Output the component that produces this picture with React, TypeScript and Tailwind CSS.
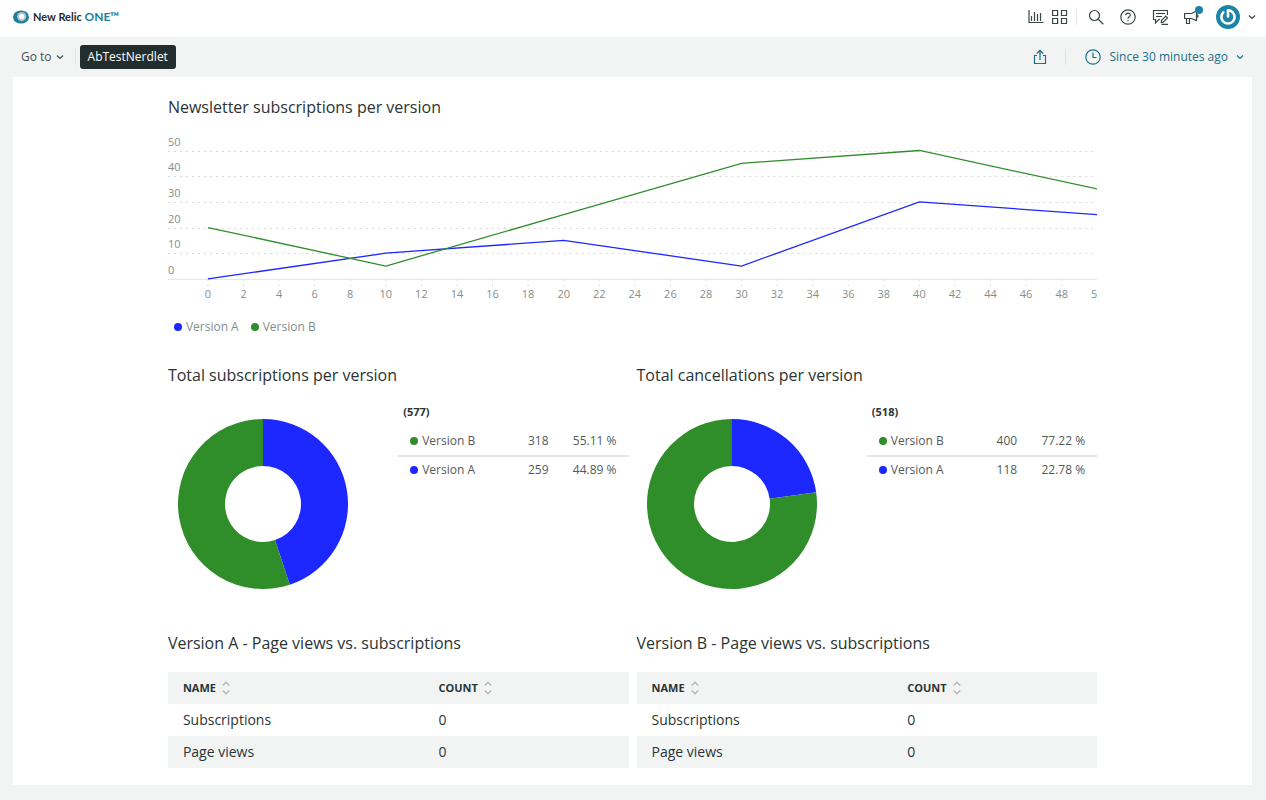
import { ReactNode } from "react";

const BLUE = "#1d27ff";
const GREEN = "#2f8d2a";

const versionA = [[0, 0], [10, 10], [20, 15], [30, 5], [40, 30], [50, 25]];
const versionB = [[0, 20], [10, 5], [20, 25], [30, 45], [40, 50], [50, 35]];

type Slice = { name: string; value: number; percent: string; color: string };

const subscriptions: Slice[] = [
    { name: "Version B", value: 318, percent: "55.11 %", color: GREEN },
    { name: "Version A", value: 259, percent: "44.89 %", color: BLUE },
];

const cancellations: Slice[] = [
    { name: "Version B", value: 400, percent: "77.22 %", color: GREEN },
    { name: "Version A", value: 118, percent: "22.78 %", color: BLUE },
];

const rows = [
    { name: "Subscriptions", count: 0 },
    { name: "Page views", count: 0 },
];

function Icon({ size = 16, children }: { size?: number; children: ReactNode }) {
    return (
        <svg width={size} height={size} viewBox={`0 0 ${size} ${size}`} fill="none" stroke="currentColor" strokeWidth="1.2" aria-hidden="true">
            {children}
        </svg>
    );
}

function Chevron() {
    return (
        <Icon size={8}>
            <path d="M1 2.5 L4 5.5 L7 2.5" />
        </Icon>
    );
}

function IconButton({ label, children }: { label: string; children: ReactNode }) {
    return (
        <button type="button" aria-label={label} className="flex items-center justify-center">
            {children}
        </button>
    );
}

function TopBar() {
    return (
        <header className="flex h-[37px] items-center justify-between bg-white pr-[10px] pb-[3px] pl-[13px]">
            <a href="#" className="flex items-center gap-1 font-['Lato','Open_Sans',sans-serif] text-[11px] font-bold text-[#1f2b2b]">
                <svg width="16" height="14" viewBox="0 0 16 14" aria-hidden="true">
                    <ellipse cx="8" cy="7" rx="8" ry="6.6" fill="#1c7f9e" />
                    <circle cx="8.7" cy="6.6" r="4.6" fill="#b9c1c4" />
                    <circle cx="8.7" cy="6.6" r="2.7" fill="#fff" />
                </svg>
                <span>
                    New Relic <span className="text-[12px] text-[#1c7f9e]">ONE™</span>
                </span>
            </a>
            <div className="flex items-center text-[#3a4646]">
                <div className="flex items-center gap-2">
                    <IconButton label="Chart builder">
                        <Icon>
                            <path d="M1 1 V13.5 H15.5 M3.5 7 V12 M6.5 3 V12 M9.5 5 V12 M12.5 4 V12" />
                        </Icon>
                    </IconButton>
                    <IconButton label="Apps">
                        <Icon>
                            <path d="M.6 1.5 h5 v5 h-5 z M9.5 1.5 h5 v5 h-5 z M.6 9.5 h5 v5 h-5 z M9.5 9.5 h5 v5 h-5 z" />
                        </Icon>
                    </IconButton>
                    <span className="h-4 w-px bg-[#e3e4e4]" />
                </div>
                <div className="ml-[11px] flex items-center gap-4">
                    <IconButton label="Search">
                        <Icon>
                            <circle cx="6.5" cy="6.5" r="5" />
                            <path d="M10.2 10.2 L15.3 15.2" />
                        </Icon>
                    </IconButton>
                    <IconButton label="Help">
                        <Icon>
                            <circle cx="8" cy="8" r="7.2" />
                            <path d="M5.8 6.3 C5.8 3.3 10.3 3.4 10.3 6.1 C10.3 7.8 8 7.8 8 9.8 M8 11 V12.3" />
                        </Icon>
                    </IconButton>
                    <IconButton label="Feedback">
                        <Icon>
                            <path d="M15.5 6 V1.5 H1.5 V10.5 H3.5 V14 L6.8 10.5 H8 M4 4.5 H13 M4 7.5 H10 M9.5 15.4 H16" />
                            <path d="M9.2 13.5 L9.6 11.4 L13.8 7.2 L15.5 8.9 L11.3 13.1 Z" />
                        </Icon>
                    </IconButton>
                    <span className="relative flex">
                        <IconButton label="Announcements">
                            <Icon>
                                <path d="M.6 4.5 H7.5 L12.5 2 V11.5 L7.5 9.5 H.6 Z M2.5 9.5 V14.5 H5.5 V9.5 M12.5 5.5 C14.6 5.5 14.6 8.5 12.5 8.5" />
                            </Icon>
                        </IconButton>
                        <span className="absolute -top-[3px] -right-[3px] size-2 rounded-full bg-[#1c84a6]" />
                    </span>
                    <button type="button" aria-label="Account" className="flex items-center gap-2">
                        <svg width="24" height="24" viewBox="0 0 24 24" fill="none" stroke="#fff" aria-hidden="true">
                            <circle cx="12" cy="12" r="12" fill="#1c84a6" stroke="none" />
                            <path d="M7.3 7.3 A6.6 6.6 0 1 0 16.7 7.3" strokeWidth="2.6" strokeLinecap="round" />
                            <path d="M12 5.3 V11.5" strokeWidth="2.6" strokeLinecap="round" />
                            <path d="M12 5.3 A6.6 6.6 0 0 1 16.7 7.3" strokeWidth="2.6" />
                        </svg>
                        <Chevron />
                    </button>
                </div>
            </div>
        </header>
    );
}

function SubBar() {
    return (
        <div className="flex h-10 items-center justify-between pr-[22px] pl-[21px] text-[12px]">
            <div className="flex items-center">
                <button type="button" className="flex items-center gap-1 text-[#464e4e]">
                    Go to <Chevron />
                </button>
                <span className="ml-[11px] h-4 w-px bg-[#e3e4e4]" />
                <button type="button" className="ml-1 h-6 rounded-[3px] bg-[#222e2e] px-2 font-medium text-white">
                    AbTestNerdlet
                </button>
            </div>
            <div className="flex items-center text-[#1c6f85]">
                <IconButton label="Share">
                    <Icon>
                        <path d="M5 6.5 H2.5 V14.5 H13.5 V6.5 H11 M8 11 V1.5 M4.8 4.5 L8 1.3 L11.2 4.5" />
                    </Icon>
                </IconButton>
                <span className="mr-[19px] ml-[17px] h-4 w-px bg-[#e3e4e4]" />
                <button type="button" className="flex items-center gap-2">
                    <Icon>
                        <circle cx="8" cy="8" r="7.2" />
                        <path d="M8 3.5 V8.5 H11.5" />
                    </Icon>
                    Since 30 minutes ago
                    <Chevron />
                </button>
            </div>
        </div>
    );
}

function Dot({ color }: { color: string }) {
    return (
        <svg width="8" height="8" viewBox="0 0 8 8" aria-hidden="true">
            <circle cx="4" cy="4" r="4" fill={color} />
        </svg>
    );
}

// Plot area: x axis starts 40px in, 0 sits at y=149 and 50 at y=20
const px = (x: number) => 40 + x * 17.8;
const py = (y: number) => 149 - y * 2.57;
const toPoints = (data: number[][]) => data.map(([x, y]) => `${px(x)},${py(y)}`).join(" ");

function LineChart() {
    const yTicks = [50, 40, 30, 20, 10, 0];
    const xTicks = Array.from({ length: 25 }, (_, i) => i * 2);

    return (
        <svg viewBox="0 0 930 172" className="mt-[11px] block h-auto w-full text-[11px]" fill="#848e8e">
            {yTicks.map((tick) => (
                <g key={tick}>
                    <text x="0" y={Math.round(py(tick)) - 5}>{tick}</text>
                    <line
                        x1="0"
                        x2="930"
                        y1={Math.round(py(tick)) + 0.5}
                        y2={Math.round(py(tick)) + 0.5}
                        stroke={tick ? "#d5d7d7" : "#e3e4e4"}
                        strokeDasharray={tick ? "2 4" : undefined}
                    />
                </g>
            ))}
            {xTicks.map((tick) => (
                <g key={tick}>
                    <line x1={px(tick)} x2={px(tick)} y1="149" y2="157" stroke="#dcdede" strokeDasharray="2 4" />
                    <text x={px(tick)} y="168" textAnchor="middle">{tick}</text>
                </g>
            ))}
            <text x="930" y="168" textAnchor="end">5</text>
            <polyline points={toPoints(versionA)} fill="none" stroke={BLUE} strokeWidth="1.3" />
            <polyline points={toPoints(versionB)} fill="none" stroke={GREEN} strokeWidth="1.3" />
        </svg>
    );
}

function Donut({ slices }: { slices: Slice[] }) {
    const total = slices.reduce((sum, s) => sum + s.value, 0);
    const share = slices[1].value / total;
    const angle = share * 2 * Math.PI;
    const point = (r: number) => `${85 + r * Math.sin(angle)} ${85 - r * Math.cos(angle)}`;

    return (
        <svg width="170" height="170" viewBox="0 0 170 170" className="shrink-0" aria-hidden="true">
            <path d={`M85 0 A85 85 0 0 1 ${point(85)} L${point(38)} A38 38 0 0 0 85 47 Z`} fill={slices[1].color} />
            <path d={`M${point(85)} A85 85 0 1 1 85 0 L85 47 A38 38 0 1 0 ${point(38)} Z`} fill={slices[0].color} />
        </svg>
    );
}

function PieCard({ title, total, slices }: { title: string; total: number; slices: Slice[] }) {
    return (
        <section>
            <h2 className="text-[16px] leading-6">{title}</h2>
            <div className="mt-4 grid grid-cols-2">
                <div className="pt-4 pl-[10px]">
                    <Donut slices={slices} />
                </div>
                <div>
                    <p className="pl-[5px] text-[11px] leading-[18px] font-bold">({total})</p>
                    <table className="mt-[7px] w-full text-[12px] text-[#515b5b]">
                        <tbody>
                            {slices.map((s) => (
                                <tr key={s.name} className="h-7 border-b-2 border-[#e6e7e7] last:border-b-0">
                                    <td className="pl-3">
                                        <span className="flex items-center gap-1">
                                            <Dot color={s.color} />
                                            {s.name}
                                        </span>
                                    </td>
                                    <td className="text-right">{s.value}</td>
                                    <td className="w-20 pr-3 text-right">{s.percent}</td>
                                </tr>
                            ))}
                        </tbody>
                    </table>
                </div>
            </div>
        </section>
    );
}

function SortHeader({ label }: { label: string }) {
    return (
        <th className="pl-[15px] text-left">
            <button type="button" className="flex items-center gap-[6px] text-[11px] font-bold">
                {label}
                <svg width="8" height="14" viewBox="0 0 8 14" fill="none" stroke="#b3baba" strokeWidth="1.5" aria-hidden="true">
                    <path d="M.7 4.5 L4 1.2 L7.3 4.5 M.7 9.5 L4 12.8 L7.3 9.5" />
                </svg>
            </button>
        </th>
    );
}

function TableCard({ title }: { title: string }) {
    return (
        <section>
            <h2 className="text-[16px] leading-6">{title}</h2>
            <table className="mt-[17px] w-full table-fixed text-[14px]">
                <colgroup>
                    <col className="w-[55.5%]" />
                    <col />
                </colgroup>
                <thead>
                    <tr className="h-8 bg-[#f2f4f4]">
                        <SortHeader label="NAME" />
                        <SortHeader label="COUNT" />
                    </tr>
                </thead>
                <tbody>
                    {rows.map((row) => (
                        <tr key={row.name} className="h-8 even:bg-[#f2f4f4]">
                            <td className="pl-[15px]">{row.name}</td>
                            <td className="pl-[15px]">{row.count}</td>
                        </tr>
                    ))}
                </tbody>
            </table>
        </section>
    );
}

export default function App() {
    return (
        <div className="min-h-screen bg-[#f2f4f4] pb-[15px] font-['Open_Sans',sans-serif] text-[#2a3434]">
            <TopBar />
            <SubBar />
            <main className="mr-[14px] ml-[13px] bg-white pt-[18px] pb-[17px]">
                <div className="mx-auto w-3/4">
                    <section>
                        <h2 className="text-[16px] leading-6">Newsletter subscriptions per version</h2>
                        <LineChart />
                        <div className="mt-[15px] flex gap-3 pl-[6px] text-[12px] leading-5 text-[#848e8e]">
                            <span className="flex items-center gap-1"><Dot color={BLUE} />Version A</span>
                            <span className="flex items-center gap-1"><Dot color={GREEN} />Version B</span>
                        </div>
                    </section>
                    <div className="mt-[26px] grid grid-cols-2 gap-2">
                        <PieCard title="Total subscriptions per version" total={577} slices={subscriptions} />
                        <PieCard title="Total cancellations per version" total={518} slices={cancellations} />
                    </div>
                    <div className="mt-[42px] grid grid-cols-2 gap-2">
                        <TableCard title="Version A - Page views vs. subscriptions" />
                        <TableCard title="Version B - Page views vs. subscriptions" />
                    </div>
                </div>
            </main>
        </div>
    );
}
